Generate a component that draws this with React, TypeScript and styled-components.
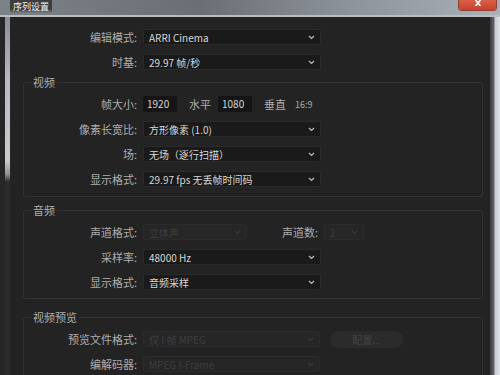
import React from 'react';
import styled, { createGlobalStyle } from 'styled-components';

const GlobalStyle = createGlobalStyle`
  html, body {
    margin: 0;
    padding: 0;
    background: #1e1e1e;
  }
  body {
    font-family: "Noto Sans CJK SC", "Noto Sans", sans-serif;
  }
`;

const Window = styled.div`
  width: 500px;
  height: 375px;
  display: flex;
  flex-direction: column;
  overflow: hidden;
`;

const TitleBar = styled.div`
  height: 15px;
  flex: none;
  display: flex;
  align-items: flex-start;
  justify-content: space-between;
  padding: 0 4px 0 10px;
  background: linear-gradient(90deg, #7d8287 0%, #6a6f75 40%, #8d939a 70%, #aab0b7 100%);
  border-bottom: 2px solid #b9bcc0;
`;

const Title = styled.div`
  height: 13px;
  line-height: 13px;
  padding: 0 3px;
  font-size: 9px;
  color: #f2f2f2;
  background: linear-gradient(180deg, #3b3d40 0%, #3b3d40 70%, rgba(59, 61, 64, 0) 100%);
`;

const CloseButton = styled.div`
  width: 37px;
  height: 10px;
  border-radius: 0 0 3px 3px;
  background: linear-gradient(180deg, #d9604a 0%, #c7412b 100%);
  box-shadow: 0 0 0 1px #8e4034;
  display: flex;
  justify-content: center;
  align-items: flex-start;
`;

const Body = styled.div`
  flex: 1;
  display: flex;
  min-height: 0;
`;

const LeftFrame = styled.div`
  width: 11px;
  flex: none;
  display: flex;
  background: #262626;
`;

const FrameStrip = styled.div`
  width: 5px;
  margin-left: 5px;
  background: linear-gradient(180deg, #8b8e92 0%, #b8bbbf 18%, #c9cccf 40%, #8e9195 44%, #2b2b2b 46%, #2b2b2b 100%);
`;

const RightFrame = styled.div`
  width: 10px;
  flex: none;
  background: linear-gradient(90deg, #3a3a3a 0%, #5d6064 35%, #c9ced4 55%, #dfe3e7 100%);
`;

const Panel = styled.div`
  flex: 1;
  background: #232323;
  padding: 12px 7px 0 12px;
  display: flex;
  flex-direction: column;
`;

const TopRows = styled.div`
  display: flex;
  flex-direction: column;
  gap: 9px;
  padding-left: 1px;
`;

const Group = styled.fieldset<{ $top: number; $bottom: number }>`
  margin: ${(p) => p.$top}px 0 0 0;
  padding: 0 0 ${(p) => p.$bottom}px 0;
  border: 1px solid #323232;
  border-radius: 2px;
  display: flex;
  flex-direction: column;
  gap: 9px;
`;

const Legend = styled.legend`
  margin-left: 7px;
  padding: 0 2px;
  font-size: 11px;
  line-height: 13px;
  color: #adadad;
  margin-bottom: 7px;
`;

const Row = styled.div`
  display: flex;
  align-items: center;
  height: 16px;
`;

const Label = styled.div<{ $width?: number }>`
  width: ${(p) => p.$width ?? 113}px;
  flex: none;
  text-align: right;
  font-size: 11px;
  color: #adadad;
  white-space: nowrap;
  margin-right: 6px;
`;

const SelectBox = styled.div<{ $width: number; $disabled?: boolean }>`
  width: ${(p) => p.$width}px;
  height: 16px;
  box-sizing: border-box;
  display: flex;
  align-items: center;
  justify-content: space-between;
  padding: 0 5px 0 5px;
  border-radius: 2px;
  background: ${(p) => (p.$disabled ? '#262626' : '#1a1a1a')};
  border: 1px solid ${(p) => (p.$disabled ? '#2b2b2b' : '#2a2a2a')};
  font-size: 10px;
  color: ${(p) => (p.$disabled ? '#3e3e3e' : '#d6d6d6')};
  white-space: nowrap;
`;

const NumberBox = styled.div`
  width: 34px;
  height: 16px;
  box-sizing: border-box;
  padding-left: 4px;
  background: #151515;
  border-radius: 1px;
  font-size: 10px;
  line-height: 16px;
  color: #d6d6d6;
`;

const Unit = styled.span<{ $gap: number }>`
  margin: 0 ${(p) => p.$gap}px 0 12px;
  font-size: 11px;
  color: #adadad;
`;

const Ratio = styled.span`
  margin-left: 9px;
  font-size: 9px;
  color: #adadad;
`;

const Spacer = styled.div<{ $width: number }>`
  width: ${(p) => p.$width}px;
  flex: none;
`;

const PillButton = styled.div`
  width: 73px;
  height: 17px;
  margin-left: 10px;
  border-radius: 9px;
  background: #2b2b2b;
  font-size: 10px;
  line-height: 17px;
  text-align: center;
  color: #444;
`;

const Chevron = ({ dim }: { dim?: boolean }) => (
  <svg width="7" height="5" viewBox="0 0 7 5">
    <path d="M1 1 L3.5 3.5 L6 1" fill="none" stroke={dim ? '#3a3a3a' : '#bdbdbd'} strokeWidth="1.2" />
  </svg>
);

const Select = ({ width, value, disabled }: { width: number; value: string; disabled?: boolean }) => (
  <SelectBox $width={width} $disabled={disabled}>
    <span>{value}</span>
    <Chevron dim={disabled} />
  </SelectBox>
);

export default function App() {
  return (
    <>
      <GlobalStyle />
      <Window>
        <TitleBar>
          <Title>序列设置</Title>
          <CloseButton>
            <svg width="8" height="6" viewBox="0 0 8 6">
              <path d="M1.5 0 L6.5 6 M6.5 0 L1.5 6" stroke="#fff" strokeWidth="1.6" />
            </svg>
          </CloseButton>
        </TitleBar>
        <Body>
          <LeftFrame>
            <FrameStrip />
          </LeftFrame>
          <Panel>
            <TopRows>
              <Row>
                <Label>编辑模式:</Label>
                <Select width={178} value="ARRI Cinema" />
              </Row>
              <Row>
                <Label>时基:</Label>
                <Select width={178} value="29.97  帧/秒" />
              </Row>
            </TopRows>

            <Group $top={6} $bottom={9}>
              <Legend>视频</Legend>
              <Row>
                <Label>帧大小:</Label>
                <NumberBox>1920</NumberBox>
                <Unit $gap={7}>水平</Unit>
                <NumberBox>1080</NumberBox>
                <Unit $gap={0}>垂直</Unit>
                <Ratio>16:9</Ratio>
              </Row>
              <Row>
                <Label>像素长宽比:</Label>
                <Select width={178} value="方形像素 (1.0)" />
              </Row>
              <Row>
                <Label>场:</Label>
                <Select width={178} value="无场（逐行扫描）" />
              </Row>
              <Row>
                <Label>显示格式:</Label>
                <Select width={178} value="29.97 fps 无丢帧时间码" />
              </Row>
            </Group>

            <Group $top={7} $bottom={8}>
              <Legend>音频</Legend>
              <Row>
                <Label>声道格式:</Label>
                <Select width={104} value="立体声" disabled />
                <Spacer $width={35} />
                <Label $width={36}>声道数:</Label>
                <Select width={40} value="2" disabled />
              </Row>
              <Row>
                <Label>采样率:</Label>
                <Select width={178} value="48000 Hz" />
              </Row>
              <Row>
                <Label>显示格式:</Label>
                <Select width={178} value="音频采样" />
              </Row>
            </Group>

            <Group $top={12} $bottom={20}>
              <Legend>视频预览</Legend>
              <Row>
                <Label>预览文件格式:</Label>
                <Select width={177} value="仅 I 帧 MPEG" disabled />
                <PillButton>配置...</PillButton>
              </Row>
              <Row>
                <Label>编解码器:</Label>
                <Select width={177} value="MPEG I-Frame" disabled />
              </Row>
            </Group>
          </Panel>
          <RightFrame />
        </Body>
      </Window>
    </>
  );
}
